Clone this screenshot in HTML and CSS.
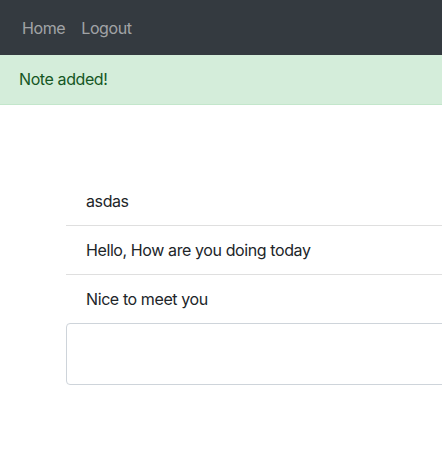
FILE: index.html
```html
<!DOCTYPE html>
<html>
<head>
<meta charset="utf-8">
<link rel="stylesheet" href="styles.css">
</head>
<body>
<nav class="navbar">
  <a class="nav-link" href="#">Home</a>
  <a class="nav-link" href="#">Logout</a>
</nav>
<div class="alert">Note added!</div>
<main class="content">
  <ul class="list-group">
    <li class="list-item">asdas</li>
    <li class="list-item">Hello, How are you doing today</li>
    <li class="list-item">Nice to meet you</li>
  </ul>
  <textarea class="note-input" rows="2"></textarea>
</main>
</body>
</html>
```

FILE: styles.css
```css
html, body {
  margin: 0;
  padding: 0;
  overflow: hidden;
}
body {
  font-family: Inter, "Noto Sans", "Liberation Sans", sans-serif;
  font-size: 16px;
  line-height: 24px;
  letter-spacing: -0.4px;
  color: #212529;
  background: #fff;
}
.navbar {
  display: flex;
  background: #343a40;
  padding: 8px 14px;
  height: 39px;
  align-items: center;
}
.nav-link {
  color: rgba(255, 255, 255, 0.55);
  text-decoration: none;
  padding: 8px 8px;
}
.alert {
  background: #d4edda;
  color: #155724;
  border-bottom: 1px solid #c3e6cb;
  padding: 12px 19px;
  height: 25px;
  line-height: 25px;
}
.content {
  margin-top: 72px;
  margin-left: 66px;
  width: 500px;
}
.list-group {
  list-style: none;
  margin: 0;
  padding: 0;
}
.list-item {
  padding: 12px 20px;
  border-top: 1px solid rgba(0, 0, 0, 0.125);
}
.list-item:first-child {
  border-top: 0;
}
.note-input {
  display: block;
  box-sizing: border-box;
  width: 100%;
  height: 62px;
  margin: 0;
  border: 1px solid #ced4da;
  border-radius: 4px;
  padding: 6px 12px;
  font: inherit;
  resize: none;
}
```
